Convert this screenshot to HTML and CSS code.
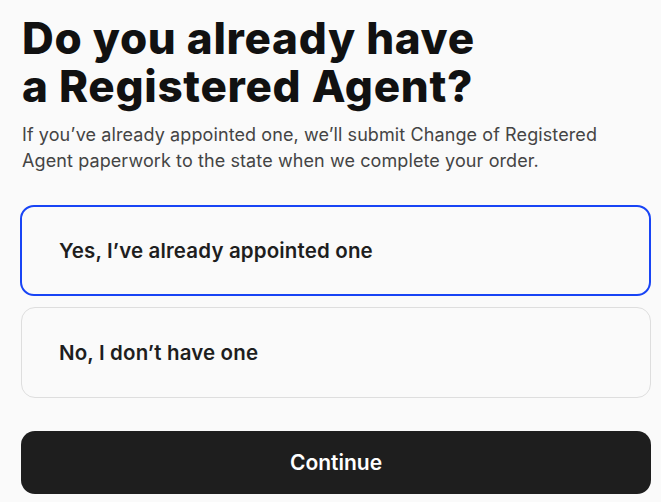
FILE: index.html
```html
<!DOCTYPE html>
<html lang="en">
<head>
<meta charset="utf-8">
<link rel="stylesheet" href="styles.css">
</head>
<body>
<main class="page">
  <h1 class="title"><span class="title-line">Do you already have</span><span class="title-line">a Registered Agent?</span></h1>
  <p class="lead">If you’ve already appointed one, we’ll submit Change of Registered Agent paperwork to the state when we complete your order.</p>
  <div class="options">
    <button class="option selected">Yes, I’ve already appointed one</button>
    <button class="option">No, I don’t have one</button>
  </div>
  <button class="cta">Continue</button>
</main>
</body>
</html>
```
FILE: styles.css
```css
* { box-sizing: border-box; }
html, body { margin: 0; padding: 0; background: #fafafa; }
body { font-family: Inter, "Noto Sans", sans-serif; color: #111; }
.page { padding: 14px 10px 0 20px; display: flex; flex-direction: column; }
.title {
  margin: 0 0 0 2px;
  font-family: Inter, sans-serif;
  font-weight: 800;
  font-size: 44px;
  letter-spacing: 0.7px;
  color: #111;
}
.title-line { display: block; height: 48px; line-height: 48px; }
.lead {
  margin: 12px 30px 0 2px;
  font-size: 18px;
  line-height: 26px;
  letter-spacing: 0.1px;
  color: #444;
  font-weight: 400;
}
.options { display: flex; flex-direction: column; gap: 11px; margin-top: 31px; }
.option {
  font-family: Inter, sans-serif;
  text-align: left;
  height: 91px;
  padding: 0 0 0 37px;
  background: #fafafa;
  border: 1px solid #dedede;
  border-radius: 14px;
  font-size: 20.5px;
  font-weight: 600;
  letter-spacing: 0.15px;
  color: #1e1e1e;
  margin-left: 1px;
}
.option.selected {
  border: 2px solid #1844f5;
  margin-left: 0;
  padding-left: 37px;
}
.cta {
  margin-top: 33px;
  margin-left: 1px;
  height: 63px;
  border: none;
  border-radius: 14px;
  background: #1e1e1e;
  color: #fff;
  font-family: Inter, sans-serif;
  font-size: 21px;
  font-weight: 600;
}
```
